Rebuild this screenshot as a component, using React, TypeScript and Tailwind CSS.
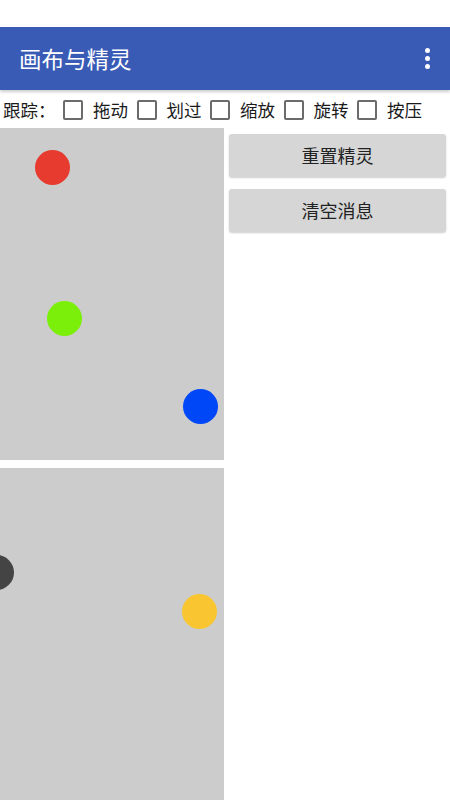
const font = { fontFamily: '"Noto Sans CJK SC", "Noto Sans", sans-serif' };

const options = ["拖动", "划过", "缩放", "旋转", "按压"];

function Ball({ x, y, color }: { x: number; y: number; color: string }) {
  // sprite on a free canvas: placement is the content
  return (
    <div
      className="absolute h-[35px] w-[35px] rounded-full"
      style={{ left: x - 17.5, top: y - 17.5, backgroundColor: color }}
    />
  );
}

export default function App() {
  return (
    <div className="flex h-[800px] w-[450px] flex-col overflow-hidden bg-white" style={font}>
      <div className="h-[27px] shrink-0 bg-white" />
      <header className="z-10 flex h-[63px] shrink-0 items-center justify-between bg-[#3a5bb5] pl-[19px] pr-[20px] shadow-[0_2px_3px_rgba(0,0,0,0.2)]">
        <h1 className="text-[22.5px] leading-none text-white">画布与精灵</h1>
        <div className="flex flex-col items-center gap-[3px]">
          <span className="h-[5px] w-[5px] rounded-full bg-white" />
          <span className="h-[5px] w-[5px] rounded-full bg-white" />
          <span className="h-[5px] w-[5px] rounded-full bg-white" />
        </div>
      </header>
      <div className="flex h-[38px] shrink-0 items-center overflow-hidden whitespace-nowrap pl-[3px] pt-[2px] text-[17.5px] leading-none text-[#1a1a1a]">
        <span className="mr-[8px] w-[52px] shrink-0">跟踪：</span>
        {options.map((o) => (
          <label key={o} className="mr-[8.5px] flex shrink-0 items-center">
            <span className="mr-[10px] h-[20px] w-[20px] shrink-0 rounded-[2px] border-2 border-[#6b6b6b]" />
            <span className="w-[35px] shrink-0">{o}</span>
          </label>
        ))}
      </div>
      <div className="flex flex-1 gap-[5px]">
        <div className="flex w-[224px] flex-col gap-[8px]">
          <div className="relative h-[332px] overflow-hidden bg-[#cccccc]">
            <Ball x={52} y={39} color="#e63b2e" />
            <Ball x={64} y={190} color="#7bef0a" />
            <Ball x={200} y={278} color="#0047f7" />
          </div>
          <div className="relative flex-1 overflow-hidden bg-[#cccccc]">
            <Ball x={-4} y={104} color="#444444" />
            <Ball x={199} y={143} color="#f9c631" />
          </div>
        </div>
        <div className="flex w-[217px] flex-col gap-[12px] pt-[6px]">
          <button className="h-[43px] rounded-[3px] bg-[#d6d6d6] text-[18px] text-[#222] shadow-[0_1px_2px_rgba(0,0,0,0.2)]">
            重置精灵
          </button>
          <button className="h-[43px] rounded-[3px] bg-[#d6d6d6] text-[18px] text-[#222] shadow-[0_1px_2px_rgba(0,0,0,0.2)]">
            清空消息
          </button>
        </div>
      </div>
    </div>
  );
}
